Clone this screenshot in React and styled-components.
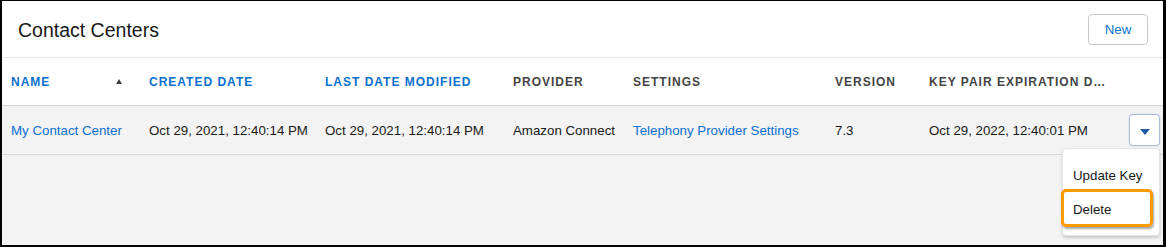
import React from "react";
import styled, { createGlobalStyle } from "styled-components";

const GlobalStyle = createGlobalStyle`
  html, body {
    margin: 0;
    padding: 0;
    background: #fff;
  }
  body {
    font-family: "Liberation Sans", Arial, sans-serif;
    color: #181818;
  }
`;

const columns = [
  { key: "name", label: "Name", sortable: true, width: "147px" },
  { key: "created", label: "Created Date", sortable: true, width: "176px" },
  { key: "modified", label: "Last Date Modified", sortable: true, width: "188px" },
  { key: "provider", label: "Provider", width: "120px" },
  { key: "settings", label: "Settings", width: "202px" },
  { key: "version", label: "Version", width: "94px" },
  { key: "expires", label: "Key Pair Expiration Date", width: "1fr" },
];

const rows = [
  {
    name: "My Contact Center",
    created: "Oct 29, 2021, 12:40:14 PM",
    modified: "Oct 29, 2021, 12:40:14 PM",
    provider: "Amazon Connect",
    settings: "Telephony Provider Settings",
    version: "7.3",
    expires: "Oct 29, 2022, 12:40:01 PM",
  },
];

const gridTemplate = columns.map((c) => c.width).join(" ") + " 34px";

const Frame = styled.div`
  box-sizing: border-box;
  width: 1166px;
  height: 247px;
  border-style: solid;
  border-color: #000;
  border-width: 1px 3px 2px 2px;
  background: #f3f3f3;
  display: flex;
  flex-direction: column;
  overflow: hidden;
`;

const Header = styled.div`
  height: 56px;
  background: #fff;
  border-bottom: 1px solid #e5e5e5;
  display: flex;
  align-items: center;
  justify-content: space-between;
  padding: 0 15px 0 16px;
`;

const Title = styled.h1`
  margin: 3px 0 0;
  font-size: 19.5px;
  font-weight: 400;
  color: #181818;
`;

const NewButton = styled.button`
  width: 60px;
  height: 31px;
  margin-top: 1px;
  background: #fff;
  border: 1px solid #c9c9c9;
  border-radius: 4px;
  font-family: inherit;
  font-size: 13.3px;
  color: #0b6fd0;
  cursor: pointer;
`;

const Row = styled.div`
  display: grid;
  grid-template-columns: ${gridTemplate};
  align-items: center;
  height: ${(p) => p.$height}px;
  background: ${(p) => (p.$head ? "#fff" : "#f3f3f3")};
  border-bottom: 1px solid ${(p) => (p.$head ? "#d4d4d4" : "#d8d8d8")};
`;

const HeadCell = styled.div`
  display: flex;
  align-items: center;
  justify-content: space-between;
  padding-left: ${(p) => (p.$first ? "9px" : "0")};
  padding-right: ${(p) => (p.$first ? "27px" : "0")};
  min-width: 0;
`;

const HeadLabel = styled.span`
  font-size: 12px;
  font-weight: 700;
  letter-spacing: 1px;
  text-transform: uppercase;
  color: ${(p) => (p.$sortable ? "#0b6fd0" : "#444")};
  white-space: nowrap;
  overflow: hidden;
  text-overflow: ellipsis;
  max-width: ${(p) => (p.$clip ? "180px" : "none")};
`;

const SortArrow = styled.span`
  width: 0;
  height: 0;
  border-left: 3.5px solid transparent;
  border-right: 3.5px solid transparent;
  border-bottom: 5px solid #3e3e3c;
`;

const Cell = styled.div`
  font-size: 13.3px;
  color: #181818;
  white-space: nowrap;
  padding-left: ${(p) => (p.$first ? "9px" : "0")};
`;

const Link = styled.a`
  color: #0b6fd0;
  text-decoration: none;
  cursor: pointer;
`;

const ActionCell = styled.div`
  position: relative;
  display: flex;
  justify-content: flex-end;
  padding-right: 3px;
`;

const MenuButton = styled.button`
  box-sizing: border-box;
  width: 31px;
  height: 32px;
  padding: 0;
  background: #fff;
  border: 1px solid #a9bdd6;
  border-radius: 4px;
  box-shadow: 0 0 2px #c4d5ea;
  display: flex;
  align-items: center;
  justify-content: center;
  cursor: pointer;
`;

const Caret = styled.span`
  margin-top: 3px;
  width: 0;
  height: 0;
  border-left: 5px solid transparent;
  border-right: 5px solid transparent;
  border-top: 6px solid #1f5aa0;
`;

const Menu = styled.ul`
  position: absolute;
  top: 34px;
  right: 3px;
  width: 98px;
  box-sizing: border-box;
  margin: 0;
  padding: 9px 0 9px;
  list-style: none;
  background: #fff;
  border: 1px solid #e5e5e5;
  border-radius: 4px;
  box-shadow: 0 2px 3px rgba(0, 0, 0, 0.16);
  z-index: 2;
`;

const MenuItem = styled.li`
  position: relative;
  height: 34px;
  display: flex;
  align-items: center;
  padding-left: 10px;
  font-size: 13.3px;
  color: #181818;
  white-space: nowrap;
`;

const Highlight = styled.span`
  position: absolute;
  left: -2px;
  right: 6px;
  top: -3px;
  bottom: -1px;
  border: 3px solid #ff9a00;
  border-radius: 5px;
  box-shadow: 1px 2px 2px rgba(0, 0, 0, 0.35);
  pointer-events: none;
`;

export default function App() {
  return (
    <>
      <GlobalStyle />
      <Frame>
        <Header>
          <Title>Contact Centers</Title>
          <NewButton>New</NewButton>
        </Header>
        <Row $head $height={47}>
          {columns.map((c, i) => (
            <HeadCell key={c.key} $first={i === 0}>
              <HeadLabel $sortable={c.sortable} $clip={c.key === "expires"}>
                {c.label}
              </HeadLabel>
              {i === 0 && <SortArrow />}
            </HeadCell>
          ))}
          <div />
        </Row>
        {rows.map((r) => (
          <Row key={r.name} $height={48}>
            <Cell $first>
              <Link>{r.name}</Link>
            </Cell>
            <Cell>{r.created}</Cell>
            <Cell>{r.modified}</Cell>
            <Cell>{r.provider}</Cell>
            <Cell>
              <Link>{r.settings}</Link>
            </Cell>
            <Cell>{r.version}</Cell>
            <Cell>{r.expires}</Cell>
            <ActionCell>
              <MenuButton aria-label="Show actions">
                <Caret />
              </MenuButton>
              <Menu>
                <MenuItem>Update Key</MenuItem>
                <MenuItem>
                  Delete
                  <Highlight />
                </MenuItem>
              </Menu>
            </ActionCell>
          </Row>
        ))}
      </Frame>
    </>
  );
}
